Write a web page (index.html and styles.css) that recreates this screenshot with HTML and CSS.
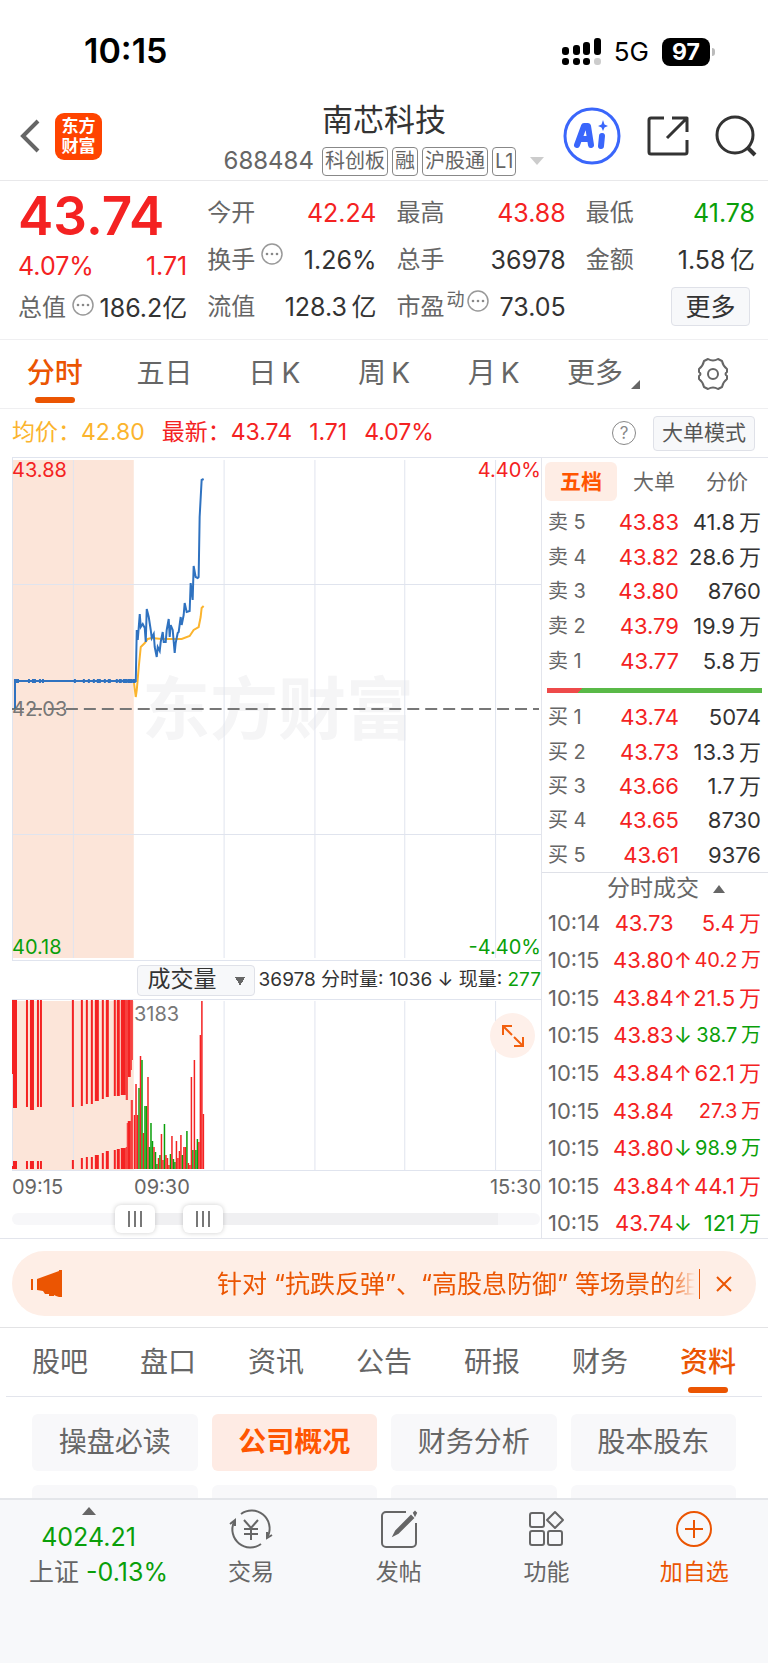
FILE: index.html
```
<!DOCTYPE html>
<html lang="zh-CN">
<head>
    <meta charset="UTF-8">
    <meta name="viewport" content="width=device-width, initial-scale=1.0">
    <title>南芯科技 688484</title>
    <link rel="stylesheet" href="styles.css">
</head>
<body>
    <div class="status-bar">
        <span class="status-time">10:15</span>
        <div class="status-right">
            <svg class="signal" width="39" height="27" viewBox="0 0 39 27">
                <rect x="0" y="9" width="7" height="8" rx="3"/>
                <rect x="11" y="7" width="7" height="10" rx="3"/>
                <rect x="21" y="4" width="7" height="13" rx="3"/>
                <rect x="32" y="0" width="7" height="17" rx="3"/>
                <rect x="0" y="20" width="7" height="7" rx="3"/>
                <rect x="11" y="20" width="7" height="7" rx="3"/>
                <rect x="21" y="20" width="7" height="7" rx="3"/>
                <rect x="32" y="20" width="7" height="7" rx="3" fill="#ccc"/>
            </svg>
            <span class="network">5G</span>
            <span class="battery">97</span>
        </div>
    </div>

    <header class="header">
        <div class="header-left">
            <button class="icon-button" aria-label="返回">
                <svg width="22" height="36" viewBox="0 0 22 36" fill="none" stroke="#666" stroke-width="4">
                    <path d="M19 3L4 18l15 15"/>
                </svg>
            </button>
            <a class="logo" href="#"><span>东方</span><span>财富</span></a>
        </div>
        <div class="header-title">
            <h1>南芯科技</h1>
            <div class="stock-tags">
                <span class="stock-code">688484</span>
                <span class="tag">科创板</span>
                <span class="tag">融</span>
                <span class="tag">沪股通</span>
                <span class="tag">L1</span>
                <svg class="tags-arrow" width="14" height="8" viewBox="0 0 14 8"><path d="M0 0h14L7 8z" fill="#ccc"/></svg>
            </div>
        </div>
        <div class="header-actions">
            <button class="icon-button" aria-label="AI">
                <svg width="58" height="58" viewBox="0 0 58 58" fill="none">
                    <circle cx="29" cy="29" r="27" stroke="#3a66fb" stroke-width="3"/>
                    <path d="M14 38L21 19h4l3 19M18 32h8" stroke="#3a66fb" stroke-width="6" stroke-linecap="round" stroke-linejoin="round"/>
                    <path d="M39 29l-1 10" stroke="#3a66fb" stroke-width="6" stroke-linecap="round"/>
                    <path d="M40 13l1.500 4.500 3.500 1.500-3.500 1.500L40 24l-1.500-3.500L35 19l3.500-1.500z" fill="#3a66fb"/>
                </svg>
            </button>
            <button class="icon-button" aria-label="分享">
                <svg width="42" height="42" viewBox="0 0 42 42" fill="none" stroke="#333" stroke-width="3" stroke-linejoin="round">
                    <path d="M17 3H4a2 2 0 0 0-2 2v32a2 2 0 0 0 2 2h34a2 2 0 0 0 2-2V25"/>
                    <path d="M20 23L39 4M25 3h15v14"/>
                </svg>
            </button>
            <button class="icon-button" aria-label="搜索">
                <svg width="42" height="42" viewBox="0 0 42 42" fill="none" stroke="#333" stroke-width="3">
                    <circle cx="20" cy="20" r="18"/>
                    <path d="M32 32l8 8" stroke-width="4"/>
                </svg>
            </button>
        </div>
    </header>

    <section class="quote">
        <div class="quote-main">
            <div class="quote-price">43.74</div>
            <div class="quote-change"><span>4.07%</span><span>1.71</span></div>
            <div class="quote-item">
                <span class="quote-label">总值<svg class="more-info" viewBox="0 0 22 22"><use href="#info"/></svg></span>
                <span class="quote-value">186.2亿</span>
            </div>
        </div>
        <div class="quote-item"><span class="quote-label">今开</span><span class="quote-value up">42.24</span></div>
        <div class="quote-item"><span class="quote-label">最高</span><span class="quote-value up">43.88</span></div>
        <div class="quote-item"><span class="quote-label">最低</span><span class="quote-value down">41.78</span></div>
        <div class="quote-item">
            <span class="quote-label">换手<svg class="more-info" viewBox="0 0 22 22"><use href="#info"/></svg></span>
            <span class="quote-value">1.26%</span>
        </div>
        <div class="quote-item"><span class="quote-label">总手</span><span class="quote-value">36978</span></div>
        <div class="quote-item"><span class="quote-label">金额</span><span class="quote-value">1.58&thinsp;亿</span></div>
        <div class="quote-item"><span class="quote-label">流值</span><span class="quote-value">128.3&thinsp;亿</span></div>
        <div class="quote-item">
            <span class="quote-label">市盈<small>动</small><svg class="more-info" viewBox="0 0 22 22"><use href="#info"/></svg></span>
            <span class="quote-value">73.05</span>
        </div>
        <div class="quote-item quote-more"><button class="more-button">更多</button></div>
    </section>

    <nav class="period-tabs">
        <button class="active">分时</button>
        <button>五日</button>
        <button>日&thinsp;K</button>
        <button>周&thinsp;K</button>
        <button>月&thinsp;K</button>
        <button>更多<svg class="corner" width="9" height="9" viewBox="0 0 9 9"><path d="M9 0v9H0z" fill="#666"/></svg></button>
        <button aria-label="设置">
            <svg class="gear" width="34" height="34" viewBox="0 0 34 34" fill="none" stroke="#666" stroke-width="2" stroke-linejoin="round">
                <path d="M12 2q5 3 10 0l4 2q1 5 5 8v3q-3 2 0 4v3q-4 3-5 8l-4 2q-5-3-10 0l-4-2q-1-5-5-8v-3q3-2 0-4v-3q4-3 5-8z"/>
                <circle cx="17" cy="17" r="5"/>
            </svg>
        </button>
    </nav>

    <div class="chart-info">
        <span class="avg">均价：42.80</span>
        <span>最新：43.74</span>
        <span>1.71</span>
        <span>4.07%</span>
        <button class="help" aria-label="帮助">?</button>
        <button class="mode-button">大单模式</button>
    </div>

    <main class="board">
        <section class="charts">
            <div class="price-chart">
                <div class="watermark">东方财富</div>
                <svg id="priceChart" viewBox="0 0 530 504" preserveAspectRatio="none"></svg>
                <span class="chart-label top-left up">43.88</span>
                <span class="chart-label top-right up">4.40%</span>
                <span class="chart-label middle-left">42.03</span>
                <span class="chart-label bottom-left down">40.18</span>
                <span class="chart-label bottom-right down">-4.40%</span>
            </div>
            <div class="volume-bar">
                <select class="indicator" aria-label="指标">
                    <option>成交量</option>
                </select>
                <span class="volume-text">36978 分时量: 1036 ↓ 现量: <b>277</b></span>
            </div>
            <div class="volume-chart">
                <svg id="volumeChart" viewBox="0 0 530 172" preserveAspectRatio="none"></svg>
                <span class="chart-label volume-max">3183</span>
                <button class="expand" aria-label="全屏">
                    <svg width="24" height="24" viewBox="0 0 24 24" fill="none" stroke="#f2600f" stroke-width="2">
                        <path d="M2 11V2h9M2 2l9 9M22 13v9h-9M22 22l-9-9"/>
                    </svg>
                </button>
            </div>
            <div class="time-axis">
                <span>09:15</span>
                <span class="open-time">09:30</span>
                <span>15:30</span>
            </div>
            <div class="range">
                <input type="range" min="0" max="100" value="21" aria-label="开始时间">
                <input type="range" min="0" max="100" value="35" aria-label="结束时间">
            </div>
        </section>

        <aside class="side">
            <div class="side-tabs">
                <button class="active">五档</button>
                <button>大单</button>
                <button>分价</button>
            </div>
            <table class="depth sell">
                <tr><th>卖 5</th><td class="up">43.83</td><td>41.8&thinsp;万</td></tr>
                <tr><th>卖 4</th><td class="up">43.82</td><td>28.6&thinsp;万</td></tr>
                <tr><th>卖 3</th><td class="up">43.80</td><td>8760</td></tr>
                <tr><th>卖 2</th><td class="up">43.79</td><td>19.9&thinsp;万</td></tr>
                <tr><th>卖 1</th><td class="up">43.77</td><td>5.8&thinsp;万</td></tr>
            </table>
            <div class="ratio"></div>
            <table class="depth buy">
                <tr><th>买 1</th><td class="up">43.74</td><td>5074</td></tr>
                <tr><th>买 2</th><td class="up">43.73</td><td>13.3&thinsp;万</td></tr>
                <tr><th>买 3</th><td class="up">43.66</td><td>1.7&thinsp;万</td></tr>
                <tr><th>买 4</th><td class="up">43.65</td><td>8730</td></tr>
                <tr><th>买 5</th><td class="up">43.61</td><td>9376</td></tr>
            </table>
            <button class="trades-title">分时成交<svg width="12" height="8" viewBox="0 0 12 8"><path d="M6 0l6 8H0z" fill="#666"/></svg></button>
            <table class="trades">
                <tr><th>10:14</th><td class="up">43.73</td><td></td><td class="up">5.4&thinsp;万</td></tr>
                <tr><th>10:15</th><td class="up">43.80</td><td class="up">↑</td><td class="up small">40.2&thinsp;万</td></tr>
                <tr><th>10:15</th><td class="up">43.84</td><td class="up">↑</td><td class="up">21.5&thinsp;万</td></tr>
                <tr><th>10:15</th><td class="up">43.83</td><td class="down">↓</td><td class="down small">38.7&thinsp;万</td></tr>
                <tr><th>10:15</th><td class="up">43.84</td><td class="up">↑</td><td class="up">62.1&thinsp;万</td></tr>
                <tr><th>10:15</th><td class="up">43.84</td><td></td><td class="up small">27.3&thinsp;万</td></tr>
                <tr><th>10:15</th><td class="up">43.80</td><td class="down">↓</td><td class="down small">98.9&thinsp;万</td></tr>
                <tr><th>10:15</th><td class="up">43.84</td><td class="up">↑</td><td class="up">44.1&thinsp;万</td></tr>
                <tr><th>10:15</th><td class="up">43.74</td><td class="down">↓</td><td class="down">121&thinsp;万</td></tr>
            </table>
        </aside>
    </main>

    <div class="promo">
        <div class="promo-box">
            <svg width="32" height="28" viewBox="0 0 32 28" fill="#eb5502">
                <path d="M0 9h2v11H0zM6 9L28 1V0h3v27h-3l-3-1-2-1v1h-5v-2h-4l-2-3-6-1z"/>
            </svg>
            <a class="promo-text" href="#">针对 “抗跌反弹”、“高股息防御” 等场景的组</a>
            <button class="icon-button promo-close" aria-label="关闭">
                <svg width="16" height="16" viewBox="0 0 16 16" fill="none" stroke="#eb5502" stroke-width="2"><path d="M1 1l14 14M15 1L1 15"/></svg>
            </button>
        </div>
    </div>

    <nav class="section-tabs">
        <button>股吧</button>
        <button>盘口</button>
        <button>资讯</button>
        <button>公告</button>
        <button>研报</button>
        <button>财务</button>
        <button class="active">资料</button>
    </nav>

    <div class="chips">
        <button>操盘必读</button>
        <button class="active">公司概况</button>
        <button>财务分析</button>
        <button>股本股东</button>
        <span></span>
        <span></span>
        <span></span>
        <span></span>
    </div>

    <footer class="bottom-bar">
        <a class="index" href="#">
            <svg width="14" height="8" viewBox="0 0 14 8"><path d="M7 0l7 8H0z" fill="#666"/></svg>
            <span class="down">4024.21</span>
            <span>上证 <span class="down">-0.13%</span></span>
        </a>
        <a class="bar-item" href="#">
            <svg width="44" height="40" viewBox="0 0 44 40" fill="none" stroke="#666" stroke-width="2">
                <path d="M12 5a18 18 0 0 1 27 22M32 35A18 18 0 0 1 5 13"/>
                <path d="M1 15l5-4v6M43 26l-5 3v-6"/>
                <path d="M15 11l7 8 7-8M22 19v12M15 20h14M15 25h14"/>
            </svg>
            <span>交易</span>
        </a>
        <a class="bar-item" href="#">
            <svg width="40" height="40" viewBox="0 0 40 40" fill="none" stroke="#666" stroke-width="2">
                <path d="M27 3H7a4 4 0 0 0-4 4v27a4 4 0 0 0 4 4h26a4 4 0 0 0 4-4V14"/>
                <path d="M32 7l2 2-15 15-4 2 2-4zM35 4l1-1 1 1-1 2z" fill="#666"/>
            </svg>
            <span>发帖</span>
        </a>
        <a class="bar-item" href="#">
            <svg width="40" height="40" viewBox="0 0 40 40" fill="none" stroke="#666" stroke-width="2" stroke-linejoin="round">
                <rect x="4" y="4" width="14" height="14" rx="2"/>
                <rect x="4" y="22" width="14" height="14" rx="2"/>
                <rect x="22" y="22" width="14" height="14" rx="2"/>
                <path d="M29 3l8 8-8 8-8-8z"/>
            </svg>
            <span>功能</span>
        </a>
        <a class="bar-item add" href="#">
            <svg width="40" height="40" viewBox="0 0 40 40" fill="none" stroke="#eb5502" stroke-width="2">
                <circle cx="20" cy="20" r="17"/>
                <path d="M20 11v18M11 20h18"/>
            </svg>
            <span>加自选</span>
        </a>
    </footer>

    <svg class="symbols">
        <symbol id="info" viewBox="0 0 22 22">
            <circle cx="11" cy="11" r="10" fill="none" stroke="#999" stroke-width="1.500"/>
            <circle cx="6" cy="11" r="1.300" fill="#888"/>
            <circle cx="11" cy="11" r="1.300" fill="#888"/>
            <circle cx="16" cy="11" r="1.300" fill="#888"/>
        </symbol>
    </svg>
    <script src="charts.js"></script>
</body>
</html>
```
FILE: styles.css
```
* {
    box-sizing: border-box;
}

body {
    margin: 0;
    min-height: 100vh;
    background-color: #fff;
    color: #333;
    font-family: Inter, "Noto Sans CJK SC", sans-serif;
    font-size: 22px;
    line-height: 1.2;
}

button,
select {
    font-family: inherit;
    line-height: 1.2;
    color: inherit;
    border: none;
    background: none;
    padding: 0;
    margin: 0;
    cursor: pointer;
}

a {
    color: inherit;
    text-decoration: none;
}

svg {
    display: block;
}

.symbols {
    display: none;
}

.icon-button {
    display: flex;
}

.up {
    color: #f42222;
}

.down {
    color: #0a9f0a;
}

/* Status bar */
.status-bar {
    display: flex;
    justify-content: space-between;
    align-items: center;
    height: 92px;
    padding: 11px 54px 0 84px;
    color: #000;
}

.status-time {
    font-size: 34px;
    font-weight: 600;
}

.status-right {
    display: flex;
    align-items: center;
    gap: 13px;
}

.network {
    font-size: 26px;
}

.battery {
    position: relative;
    width: 48px;
    line-height: 28px;
    border-radius: 8px;
    background-color: #000;
    color: #fff;
    font-size: 23px;
    font-weight: 700;
    text-align: center;
    margin-right: 4px;
}

.battery::after {
    content: "";
    position: absolute;
    right: -5px;
    top: 10px;
    width: 3px;
    height: 8px;
    border-radius: 0 3px 3px 0;
    background-color: #bbb;
}

/* Header */
.header {
    display: grid;
    grid-template-columns: 1fr auto 1fr;
    align-items: center;
    height: 89px;
    padding: 0 11px;
    border-bottom: 1px solid #e8e8ea;
}

.header-left {
    display: flex;
    align-items: center;
    gap: 14px;
    padding-left: 8px;
}

.logo {
    display: flex;
    flex-direction: column;
    align-items: center;
    justify-content: center;
    width: 47px;
    height: 47px;
    border-radius: 9px;
    background-color: #ff4400;
    color: #fff;
    font-size: 17px;
    font-weight: 700;
    line-height: 20px;
}

.header-title {
    display: flex;
    flex-direction: column;
    align-items: center;
    padding-top: 2px;
}

.header-title h1 {
    margin: 0;
    font-size: 31px;
    font-weight: 400;
    line-height: 48px;
}

.stock-tags {
    display: flex;
    align-items: center;
    gap: 4px;
    height: 34px;
    color: #666;
}

.stock-code {
    font-size: 24px;
    margin-right: 4px;
}

.tag {
    padding: 0 2px;
    border: 1px solid #888;
    border-radius: 4px;
    font-size: 20px;
    line-height: 27px;
}

.tags-arrow {
    margin-left: 10px;
}

.header-actions {
    display: flex;
    align-items: center;
    justify-content: flex-end;
    gap: 26px;
}

/* Quote */
.quote {
    display: grid;
    grid-template-columns: repeat(4, 1fr);
    grid-auto-rows: 47px;
    column-gap: 20px;
    padding: 8px 13px 9px 18px;
    border-bottom: 1px solid #efeff1;
}

.quote-main {
    grid-row: span 3;
    display: flex;
    flex-direction: column;
}

.quote-price {
    color: #f42222;
    font-size: 53px;
    font-weight: 600;
    line-height: 54px;
}

.quote-change {
    display: flex;
    justify-content: space-between;
    color: #f42222;
    font-size: 25px;
    line-height: 46px;
}

.quote-item {
    display: flex;
    align-items: center;
    justify-content: space-between;
    line-height: 44px;
}

.quote-main .quote-item {
    line-height: 38px;
}

.quote-label {
    display: flex;
    color: #666;
    font-size: 24px;
}

.quote-label small {
    font-size: 18px;
    line-height: 30px;
    margin-left: 2px;
}

.quote-value {
    font-size: 25px;
}

.more-info {
    width: 22px;
    height: 22px;
    margin: 5px 0 0 6px;
}

.quote-label small + .more-info {
    margin-left: 2px;
}

.quote-more {
    justify-content: flex-end;
}

.more-button {
    width: 79px;
    height: 39px;
    margin-right: 5px;
    border: 1px solid #dfe1e8;
    border-radius: 4px;
    background-color: #f7f8fa;
    font-size: 25px;
}

/* Period tabs */
.period-tabs {
    display: flex;
    height: 69px;
    border-bottom: 1px solid #efeff1;
}

.period-tabs button {
    position: relative;
    display: flex;
    flex: 1;
    align-items: center;
    justify-content: center;
    gap: 8px;
    color: #666;
    font-size: 28px;
}

.period-tabs .active,
.section-tabs .active {
    color: #eb5502;
    font-weight: 500;
}

.period-tabs .active::after,
.section-tabs .active::after {
    content: "";
    position: absolute;
    left: calc(50% - 20px);
    bottom: 5px;
    width: 40px;
    height: 6px;
    border-radius: 3px;
    background-color: #eb5502;
}

.corner {
    margin-top: 20px;
}

/* Chart info */
.chart-info {
    display: flex;
    align-items: center;
    gap: 17px;
    height: 48px;
    padding: 0 13px 0 12px;
    color: #f42222;
    font-size: 23px;
}

.chart-info .avg {
    color: #fbb42e;
}

.help {
    width: 24px;
    height: 24px;
    margin-left: auto;
    border: 1px solid #888;
    border-radius: 50%;
    color: #888;
    font-size: 17px;
    line-height: 22px;
}

.mode-button {
    height: 35px;
    padding: 0 8px;
    border: 1px solid #dfe1e8;
    border-radius: 4px;
    background-color: #f7f8fa;
    color: #555;
    font-size: 21px;
}

/* Board */
.board {
    display: flex;
    border-bottom: 1px solid #e3e5ec;
}

.charts {
    flex: 1;
    min-width: 0;
    padding-left: 12px;
}

.price-chart,
.volume-chart {
    position: relative;
}

.price-chart svg {
    position: relative;
    width: 100%;
    height: 504px;
}

.watermark {
    position: absolute;
    left: 130px;
    top: 207px;
    color: #f5f5f6;
    font-size: 68px;
    font-weight: 700;
    line-height: 90px;
}

.volume-chart > svg {
    width: 100%;
    height: 172px;
}

.chart-label {
    position: absolute;
    font-size: 20px;
    line-height: 24px;
}

.top-left {
    left: 0;
    top: 1px;
}

.top-right {
    right: 0;
    top: 1px;
}

.middle-left {
    left: 0;
    top: 240px;
    color: #777;
}

.bottom-left {
    left: 0;
    bottom: 2px;
}

.bottom-right {
    right: 0;
    bottom: 2px;
}

.volume-bar {
    display: flex;
    align-items: center;
    justify-content: flex-end;
    gap: 4px;
    height: 38px;
}

.indicator {
    width: 118px;
    height: 31px;
    padding-left: 10px;
    border: 1px solid #dfe1e8;
    border-radius: 4px;
    appearance: none;
    background:
        linear-gradient(60deg, transparent 50%, #666 50%) 97px 11px / 5px 9px no-repeat,
        linear-gradient(-60deg, transparent 50%, #666 50%) 102px 11px / 5px 9px no-repeat,
        #f7f8fa;
    font-size: 23px;
}

.volume-text {
    font-size: 19px;
    white-space: nowrap;
}

.volume-text b {
    color: #0a9f0a;
    font-weight: 400;
}

.volume-max {
    left: 122px;
    top: 3px;
    color: #777;
}

.expand {
    position: absolute;
    right: 6px;
    top: 14px;
    display: flex;
    align-items: center;
    justify-content: center;
    width: 45px;
    height: 45px;
    border-radius: 50%;
    background-color: #fef0ea;
}

.time-axis {
    display: flex;
    color: #666;
    font-size: 20px;
    line-height: 32px;
}

.time-axis .open-time {
    flex: 1;
    margin-left: 71px;
}

.range {
    position: relative;
    height: 32px;
}

.range::before {
    content: "";
    position: absolute;
    left: 0;
    right: 1px;
    top: 10px;
    height: 12px;
    border-radius: 6px;
    background: linear-gradient(90deg, #f7f7f9 23%, #f0f0f2 23%, #f0f0f2 92%, #f7f7f9 92%);
}

.range input {
    position: absolute;
    left: 0;
    top: 0;
    width: 100%;
    height: 32px;
    margin: 0;
    appearance: none;
    background: none;
    pointer-events: none;
}

.range input::-webkit-slider-thumb {
    appearance: none;
    width: 40px;
    height: 28px;
    border-radius: 6px;
    background: repeating-linear-gradient(90deg, #777 0 2px, transparent 2px 6px) 13px 6px / 14px 16px no-repeat #fff;
    box-shadow: 0 0 5px rgba(0, 0, 0, 0.2);
    pointer-events: auto;
}

/* Side panel */
.side {
    width: 227px;
    border-left: 1px solid #e3e5ec;
}

.side-tabs {
    display: flex;
    gap: 1px;
    padding: 4px 5px 4px 3px;
    border-top: 1px solid #e3e5ec;
}

.side-tabs button {
    flex: 1;
    height: 39px;
    border-radius: 6px;
    color: #666;
    font-size: 21px;
}

.side-tabs .active {
    background-color: #feede5;
    color: #ff5500;
    font-weight: 700;
}

.depth,
.trades {
    width: 100%;
    border-collapse: collapse;
    font-size: 22px;
    line-height: 24px;
}

.sell {
    height: 173px;
}

.buy {
    height: 172px;
}

/* the last row runs close to the bottom border */
.trades {
    height: 338px;
    margin-bottom: -4px;
}

.side th {
    padding: 0 0 0 6px;
    color: #666;
    font-weight: 400;
    text-align: left;
    white-space: nowrap;
}

.side td {
    padding: 0;
    text-align: right;
    white-space: nowrap;
}

.side td:last-child {
    padding-right: 7px;
}

.depth th {
    width: 60px;
    font-size: 20px;
}

.depth td:last-child {
    width: 89px;
}

.trades th {
    width: 64px;
}

.trades td:nth-child(3) {
    width: 14px;
}

.trades td:last-child {
    width: 76px;
}

.trades .small {
    font-size: 20px;
}

.ratio {
    height: 5px;
    margin: 10px 6px 7px 5px;
    background: linear-gradient(135deg, #ee4a4a 25px, #59b947 25px);
}

.trades-title {
    display: flex;
    align-items: center;
    justify-content: center;
    gap: 14px;
    width: 100%;
    height: 32px;
    padding-left: 22px;
    border-top: 1px solid #dfe1e8;
    color: #666;
    font-size: 23px;
}

/* Promo */
.promo {
    padding: 12px 12px 11px;
    border-bottom: 1px solid #e3e3e5;
}

.promo-box {
    display: flex;
    align-items: center;
    height: 65px;
    padding: 0 24px 0 19px;
    border-radius: 33px;
    background-color: #feeee6;
    color: #eb5502;
}

.promo-text {
    flex: 1;
    margin-left: 154px;
    overflow: hidden;
    white-space: nowrap;
    font-size: 25px;
    line-height: 40px;
    mask-image: linear-gradient(90deg, #000 calc(100% - 26px), transparent);
}

.promo-close {
    align-items: center;
    height: 30px;
    margin-left: 4px;
    padding-left: 16px;
    border-left: 1px solid #eb5502;
}

/* Section tabs */
.section-tabs {
    display: flex;
    margin: 0 6px;
    border-bottom: 1px solid #e3e5ec;
}

.section-tabs button {
    position: relative;
    flex: 1;
    height: 68px;
    padding-top: 2px;
    color: #666;
    font-size: 28px;
}

.section-tabs .active::after {
    bottom: 3px;
}

/* Chips */
.chips {
    display: grid;
    grid-template-columns: repeat(4, 1fr);
    gap: 14px;
    padding: 17px 32px 0;
}

.chips button,
.chips span {
    height: 57px;
    border-radius: 6px;
    background-color: #f8f8fa;
    color: #666;
    font-size: 28px;
}

.chips .active {
    background-color: #feebe4;
    color: #ff5500;
    font-weight: 700;
}

/* Bottom bar */
.bottom-bar {
    position: fixed;
    left: 0;
    right: 0;
    bottom: 0;
    display: flex;
    height: 165px;
    padding-top: 7px;
    border-top: 2px solid #e4e6ea;
    background-color: #f7f8fa;
    color: #666;
}

.index {
    display: flex;
    flex-direction: column;
    align-items: center;
    width: 177px;
    padding-left: 20px;
    font-size: 25px;
    line-height: 35px;
}

.index svg {
    margin-right: 20px;
    margin-bottom: 5px;
}

.index > .down {
    margin-right: 20px;
}

.bar-item {
    display: flex;
    flex: 1;
    flex-direction: column;
    align-items: center;
    gap: 5px;
    padding-top: 2px;
    font-size: 23px;
    line-height: 36px;
}

.add {
    color: #eb5502;
}
```
FILE: charts.js
```
const GRID = '#e0e4ee';
const RED = '#f42222';
const GREEN = '#0a9f0a';
const columns = [61, 212, 303, 393, 484];

// Opening auction ticks: x, width, end of upper bar, start of lower bar
const auction = [
    [0, 1, 75, 167], [1, 4, 109, 162], [14, 2, 108, 162], [18, 4, 111, 162], [25, 2, 108, 162], [28, 2, 108, 162],
    [60, 2, 108, 161], [69, 2, 107, 159], [74, 2, 105, 158], [79, 2, 105, 158], [83, 4, 102, 156],
    [90, 2, 100, 154], [94, 3, 98, 152], [102, 2, 97, 151], [105, 3, 97, 150], [109, 5, 96, 149],
    [114, 1, 101, 148], [115, 1, 101, 124], [116, 3, 78, 122], [119, 1, 71, 101], [120, 1, 61, 101]
];

const volumes = 'r54 r85 r54 g81 r113 g109 r36 g63 g63 r92 g22 g46 g28 r22 g17 g5 r11 g14 r35 r9 g45 r14 r11 r4 g15 r33 g10 g7 r28 r11 r18 r34 g14 r22 r22 g38 r6 r4 r92 g19 r109 g19 g30 r27 r134 r168 r55'.split(' ');

const price = '3,252 3,224 124,224 125,173 126,183 128,157 129,170 131,167 133,171 134,185 135,152 137,160 139,173 140,181 142,177 143,190 145,200 146,190 148,194 149,185 151,175 152,185 154,185 155,173 157,162 158,180 159,168 161,173 163,196 164,186 166,176 167,175 169,160 170,168 172,158 173,146 175,155 178,154 179,126 181,143 182,109 184,120 186,121 187,120 188,60 190,23 192,22';
const average = '122,224 124,240 125,233 127,210 129,190 133,186 136,182 140,181 150,182 170,182 178,179 182,173 187,170 189,160 190,151 192,149';

function rect(x, y, width, height, fill) {
    return `<rect x="${x}" y="${y}" width="${width}" height="${height}" fill="${fill}"/>`;
}

function grid(top, bottom) {
    return columns.map(x => rect(x, top, 1, bottom - top, GRID)).join('');
}

function drawPrice() {
    let out = rect(0, 3, 122, 498, '#fce5d9');
    out += grid(3, 501);
    out += [0, 127, 377, 503].map(y => rect(0, y, 530, 1, GRID)).join('');
    out += rect(0, 0, 1, 504, GRID);
    out += '<path d="M0 252H528" stroke="#777" stroke-width="2" stroke-dasharray="12 6"/>';
    out += `<polyline points="${average}" fill="none" stroke="#fbb42e" stroke-width="2"/>`;
    out += `<polyline points="${price}" fill="none" stroke="#2f72c0" stroke-width="2"/>`;
    auction.forEach(([x, width]) => {
        out += rect(x + 2, 222, Math.max(width, 2), 4, '#2f72c0');
    });
    document.getElementById('priceChart').innerHTML = out;
}

function drawVolume() {
    let out = rect(0, 2, 122, 169, '#fce5d9');
    out += grid(2, 171);
    out += rect(0, 0, 530, 1, GRID) + rect(0, 171, 530, 1, GRID) + rect(0, 0, 1, 172, GRID);
    auction.forEach(([x, width, top, bottom]) => {
        out += rect(x, 1, width, top - 1, RED) + rect(x, bottom, width, 170 - bottom, RED);
    });
    volumes.forEach((item, i) => {
        const height = Number(item.slice(1));
        out += rect(122 + i * 1.5, 170 - height, 1.5, height, item[0] === 'r' ? RED : GREEN);
    });
    document.getElementById('volumeChart').innerHTML = out;
}

drawPrice();
drawVolume();
```
